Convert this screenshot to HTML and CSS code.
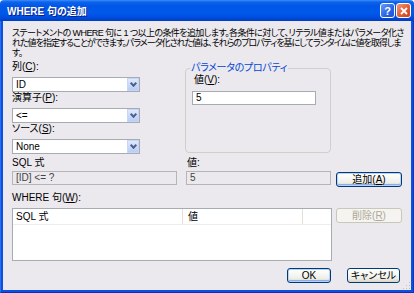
FILE: index.html
```html
<!DOCTYPE html>
<html lang="ja">

<head>
    <meta charset="UTF-8">
    <title>WHERE 句の追加</title>
    <link rel="stylesheet" href="styles.css">
</head>

<body>
    <div class="window">
        <!-- Title bar -->
        <div class="titlebar">
            <span class="title">WHERE 句の追加</span>
            <div class="caption-buttons">
                <span class="cap-btn help">?</span>
                <span class="cap-btn close">
                    <svg width="8" height="8" viewBox="0 0 8 8">
                        <path d="M1 1 L7 7 M7 1 L1 7" stroke="#fff" stroke-width="1.8" />
                    </svg>
                </span>
            </div>
        </div>

        <div class="frame">
            <div class="client">
                <p class="desc">
                    <span class="desc-line">ステートメントの WHERE 句に 1 つ以上の条件を追加します。各条件に対して、リテラル値またはパラメータ化さ</span>
                    <span class="desc-line tight">れた値を指定することができます。パラメータ化された値は、それらのプロパティを基にしてランタイムに値を取得しま</span>
                    <span class="desc-line">す。</span>
                </p>

                <div class="top-row">
                    <div class="fields">
                        <label class="lbl">列(<u>C</u>):</label>
                        <div class="combo"><span class="combo-text">ID</span><span class="drop"></span></div>

                        <label class="lbl">演算子(<u>P</u>):</label>
                        <div class="combo"><span class="combo-text">&lt;=</span><span class="drop"></span></div>

                        <label class="lbl">ソース(<u>S</u>):</label>
                        <div class="combo"><span class="combo-text">None</span><span class="drop"></span></div>
                    </div>

                    <div class="group">
                        <span class="group-title">パラメータのプロパティ</span>
                        <label class="lbl value-lbl">値(<u>V</u>):</label>
                        <div class="textbox value-box">5</div>
                    </div>
                </div>

                <div class="expr-row">
                    <div class="expr-col sql-col">
                        <label class="lbl">SQL 式</label>
                        <div class="textbox readonly">[ID] &lt;= ?</div>
                    </div>
                    <div class="expr-col val-col">
                        <label class="lbl">値:</label>
                        <div class="textbox readonly">5</div>
                    </div>
                    <button class="btn default add-btn">追加(<u>A</u>)</button>
                </div>

                <label class="lbl where-lbl">WHERE 句(<u>W</u>):</label>

                <div class="where-row">
                    <div class="listview">
                        <div class="lv-header">
                            <span class="lv-col col-sql">SQL 式</span>
                            <span class="lv-col col-val">値</span>
                            <span class="lv-col col-rest"></span>
                        </div>
                    </div>
                    <button class="btn disabled">削除(<u>R</u>)</button>
                </div>

                <div class="footer">
                    <button class="btn default ok-btn">OK</button>
                    <button class="btn cancel-btn">キャンセル</button>
                </div>

                <svg class="grip" width="10" height="10" viewBox="0 0 10 10">
                    <rect x="8" y="2" width="1" height="1" fill="#c5c2b2" />
                    <rect x="5" y="5" width="1" height="1" fill="#c5c2b2" />
                    <rect x="8" y="5" width="1" height="1" fill="#c5c2b2" />
                    <rect x="2" y="8" width="1" height="1" fill="#c5c2b2" />
                    <rect x="5" y="8" width="1" height="1" fill="#c5c2b2" />
                    <rect x="8" y="8" width="1" height="1" fill="#c5c2b2" />
                </svg>
            </div>
        </div>
    </div>
</body>

</html>
```

FILE: styles.css
```css
* {
    box-sizing: border-box;
}

body {
    margin: 0;
    width: 414px;
    height: 293px;
    background: #fff;
    font-family: "Liberation Sans", "Noto Sans CJK JP", sans-serif;
    font-size: 10px;
    font-feature-settings: "palt";
    color: #000;
    overflow: hidden;
}

u {
    text-decoration: underline;
}

.window {
    width: 414px;
    height: 293px;
    display: flex;
    flex-direction: column;
}

/* Title bar */
.titlebar {
    height: 21px;
    flex: none;
    display: flex;
    align-items: center;
    justify-content: space-between;
    padding: 0 3px 0 7px;
    background: linear-gradient(to bottom, #3d8ef8 0px, #0d63ec 2px, #0057e6 6px, #0059ec 13px, #004bdb 18px, #003cc0 21px);
    border-radius: 4px 4px 0 0;
}

.title {
    color: #fff;
    font-weight: bold;
    font-size: 10px;
    text-shadow: 1px 1px 0 #0a1e8c;
    white-space: nowrap;
}

.caption-buttons {
    display: flex;
    gap: 1px;
}

.cap-btn {
    width: 15px;
    height: 15px;
    border: 1px solid #fff;
    border-radius: 3px;
    display: flex;
    align-items: center;
    justify-content: center;
    color: #fff;
    font-weight: bold;
    font-size: 11px;
}

.help {
    background: linear-gradient(135deg, #6c9cf6, #2763e6 60%, #1d55d6);
}

.close {
    background: linear-gradient(135deg, #f29a7c, #e25c32 55%, #c8421a);
}

/* Window frame */
.frame {
    flex: 1;
    min-width: 0;
    display: flex;
    background: #0b50de;
    border-left: 1px solid #2a6ff0;
    border-right: 1px solid #0a35c4;
    border-bottom: 1px solid #0a2fb4;
    padding: 0 2px 2px;
}

.client {
    flex: 1;
    min-width: 0;
    overflow: hidden;
    position: relative;
    background: #ebe9ed;
    padding: 7px 9px 0;
    display: flex;
    flex-direction: column;
}

.desc {
    margin: 0;
    font-size: 9px;
    line-height: 10px;
    white-space: nowrap;
}

.desc-line {
    display: block;
    height: 10px;
    letter-spacing: -0.6px;
}

.desc-line.tight {
    letter-spacing: -1px;
}

.lbl {
    display: block;
    line-height: 10px;
    height: 10px;
    white-space: nowrap;
}

/* Upper area */
.top-row {
    display: flex;
    margin-top: 4px;
}

.fields {
    width: 128px;
    display: flex;
    flex-direction: column;
}

.fields .lbl + .combo {
    margin-top: 5px;
}

.fields .combo + .lbl {
    margin-top: 1px;
}

.combo {
    height: 15px;
    background: #fff;
    border: 1px solid #a5acb2;
    display: flex;
    align-items: center;
    justify-content: space-between;
    padding-left: 3px;
}

.combo-text {
    line-height: 10px;
}

.drop {
    width: 12px;
    height: 13px;
    border: 1px solid #c6d6f8;
    background: linear-gradient(to bottom, #dfe9fe, #b9cdf8);
    position: relative;
}

.drop::after {
    content: "";
    position: absolute;
    left: 3px;
    top: 2px;
    width: 3px;
    height: 3px;
    border-right: 2px solid #4d6185;
    border-bottom: 2px solid #4d6185;
    transform: rotate(45deg);
}

.group {
    position: relative;
    margin: 6px 0 0 45px;
    width: 146px;
    height: 85px;
    border: 1px solid #d0d0c8;
    border-radius: 4px;
    padding: 6px 0 0 6px;
}

.group-title {
    position: absolute;
    top: -6px;
    left: 4px;
    padding: 0 1px;
    line-height: 10px;
    background: #ebe9ed;
    color: #0046d5;
    white-space: nowrap;
    letter-spacing: -0.3px;
}

.value-lbl {
    margin-left: 2px;
}

.textbox {
    height: 14px;
    border: 1px solid #a5acb2;
    background: #fff;
    line-height: 12px;
    padding-left: 3px;
    white-space: nowrap;
}

.value-box {
    width: 124px;
    margin-top: 6px;
}

.textbox.readonly {
    background: #ebe9ed;
    border-color: #b5b5b5;
    color: #444;
}

/* SQL expression row */
.expr-row {
    display: flex;
    align-items: flex-start;
    margin-top: 4px;
}

.expr-col .textbox {
    margin-top: 3px;
}

.sql-col {
    width: 165px;
}

.val-col {
    width: 145px;
    margin-left: 9px;
}

.val-col .lbl {
    margin-left: 1px;
}

.add-btn {
    margin: 14px 0 0 5px;
}

/* Buttons */
.btn {
    width: 66px;
    height: 15px;
    padding: 0;
    font: inherit;
    color: #000;
    border: 1px solid #003c74;
    border-radius: 3px;
    background: linear-gradient(to bottom, #fff, #f0f0ea 70%, #d8d4c8);
    line-height: 12px;
    white-space: nowrap;
}

.btn.default {
    box-shadow: inset 0 0 0 1px #b9d1f8, inset 0 -1px 0 1px #89adef;
}

.btn.disabled {
    color: #aca899;
    border-color: #c9c7ba;
    background: #f5f4f0;
}

.where-lbl {
    margin-top: 6px;
}

.where-row {
    display: flex;
    align-items: flex-start;
    margin-top: 5px;
}

.where-row .btn {
    margin-left: 4px;
}

.listview {
    width: 320px;
    height: 53px;
    background: #fff;
    border: 1px solid #a5acb2;
}

.lv-header {
    display: flex;
    height: 16px;
    border-bottom: 1px solid #eeede8;
}

.lv-col {
    line-height: 15px;
    padding-left: 3px;
    border-right: 1px solid #e2e0d6;
}

.col-sql {
    width: 170px;
}

.col-val {
    width: 120px;
    padding-left: 5px;
}

.col-rest {
    flex: 1;
    border-right: 0;
}

/* Dialog buttons */
.footer {
    display: flex;
    justify-content: flex-end;
    gap: 16px;
    margin-top: 7px;
    padding-right: 2px;
}

.ok-btn {
    width: 44px;
}

.cancel-btn {
    width: 53px;
}

.grip {
    position: absolute;
    right: 0;
    bottom: 0;
}
```
